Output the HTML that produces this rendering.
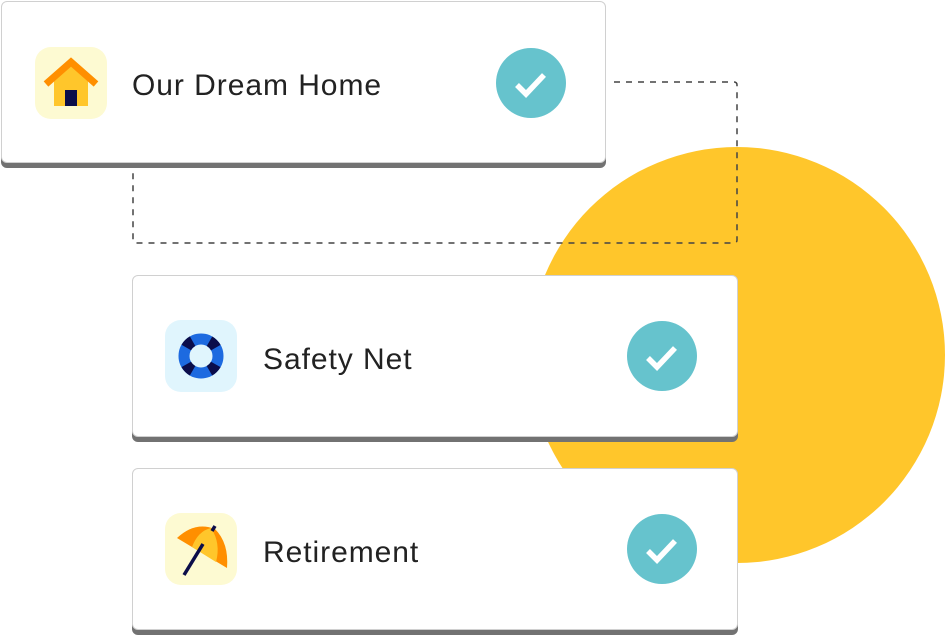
<!DOCTYPE html>
<html><head><style>
body{margin:0;width:945px;height:636px;background:#fff;position:relative;overflow:hidden;font-family:"Liberation Sans",sans-serif}
.card{position:absolute;background:#fff;border:1px solid #d0d0d0;border-radius:6px;box-shadow:0 5px 0 #727272;box-sizing:border-box}
.ib{position:absolute;width:72px;height:72px;border-radius:16px}
.t{position:absolute;font-size:30px;color:#222;letter-spacing:0.95px;line-height:1}
.ck{position:absolute;width:70px;height:70px;border-radius:50%;background:#66c3cd}
</style></head><body>
<div style="position:absolute;left:529px;top:147px;width:416px;height:416px;border-radius:50%;background:#ffc62b"></div>
<svg style="position:absolute;left:0;top:0" width="945" height="636"><path d="M614 82H734Q737 82 737 85V240Q737 243 734 243H136Q133 243 133 240V168" fill="none" stroke="#444" stroke-width="1.5" stroke-dasharray="6 6"/></svg>
<div class="card" style="left:1px;top:1px;width:605px;height:162px">
 <div class="ib" style="left:33px;top:45px;background:#fdfad2">
  <svg width="72" height="72"><path d="M19 33L36 18L53 33V59H19Z" fill="#ffc62b"/><path d="M11 37L36 15L61 37" fill="none" stroke="#ff8f00" stroke-width="7"/><rect x="30" y="43" width="12" height="16" fill="#0b0d4a"/></svg>
 </div>
 <div class="t" style="left:130px;top:69px">Our Dream Home</div>
 <div class="ck" style="left:494px;top:46px"><svg width="70" height="70"><path d="M21 37L30 46L48 27" fill="none" stroke="#fff" stroke-width="5.5"/></svg></div>
</div>
<div class="card" style="left:132px;top:275px;width:606px;height:162px">
 <div class="ib" style="left:32px;top:44px;background:#e0f5fd">
  <svg width="72" height="72"><circle cx="36" cy="36" r="17" fill="none" stroke="#1d6ae0" stroke-width="11"/><circle cx="36" cy="36" r="17" fill="none" stroke="#0b0d4a" stroke-width="11" stroke-dasharray="9 17.7" stroke-dashoffset="-8.8"/></svg>
 </div>
 <div class="t" style="left:130px;top:69px">Safety Net</div>
 <div class="ck" style="left:494px;top:45px"><svg width="70" height="70"><path d="M21 37L30 46L48 27" fill="none" stroke="#fff" stroke-width="5.5"/></svg></div>
</div>
<div class="card" style="left:132px;top:468px;width:606px;height:162px">
 <div class="ib" style="left:32px;top:44px;background:#fdfad2">
  <svg width="72" height="72"><path d="M12 25Q30 8 50 16Q64 30 62 55Z" fill="#ff8f00"/><path d="M27 34Q33 18 46 15Q56 30 51 49Z" fill="#ffc62b"/><path d="M19 62L38 31" stroke="#0b0d4a" stroke-width="3.5"/><path d="M47 18L50 13" stroke="#0b0d4a" stroke-width="3.5"/></svg>
 </div>
 <div class="t" style="left:130px;top:69px">Retirement</div>
 <div class="ck" style="left:494px;top:45px"><svg width="70" height="70"><path d="M21 37L30 46L48 27" fill="none" stroke="#fff" stroke-width="5.5"/></svg></div>
</div>
</body></html>
